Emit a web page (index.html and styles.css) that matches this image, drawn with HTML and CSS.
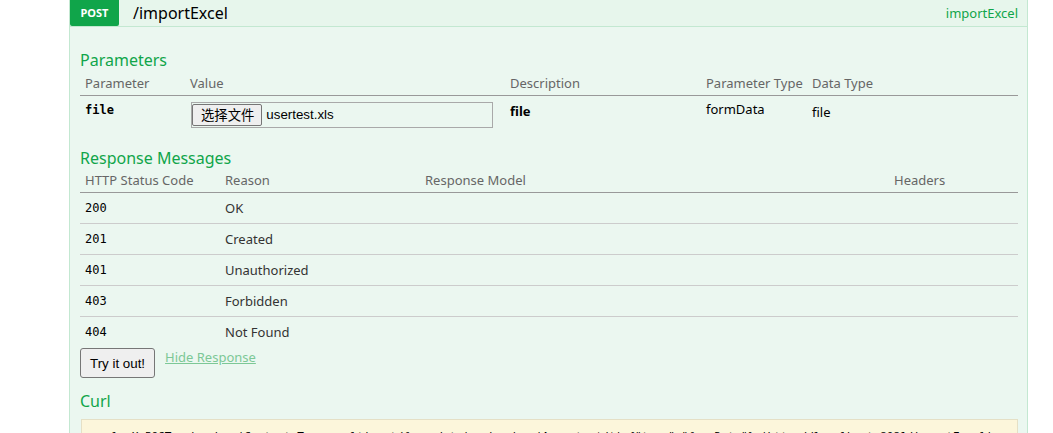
FILE: index.html
```html
<!DOCTYPE html>
<html>
<head>
<meta charset="utf-8">
<link rel="stylesheet" href="styles.css">
</head>
<body>
<div class="op">
  <div class="heading">
    <span class="badge">POST</span>
    <span class="path">/importExcel</span>
    <span class="nick">importExcel</span>
  </div>
  <div class="content">
    <h4 class="title params-title">Parameters</h4>
    <table class="tbl params">
      <colgroup>
        <col class="c-param"><col class="c-value"><col class="c-desc"><col class="c-ptype"><col>
      </colgroup>
      <thead>
        <tr><th>Parameter</th><th>Value</th><th>Description</th><th>Parameter Type</th><th>Data Type</th></tr>
      </thead>
      <tbody>
        <tr>
          <td class="code strong">file</td>
          <td>
            <div class="file-input">
              <span class="file-btn">选择文件</span>
              <span class="file-name">usertest.xls</span>
            </div>
          </td>
          <td class="strong">file</td>
          <td class="ptype">formData</td>
          <td class="dtype">file</td>
        </tr>
      </tbody>
    </table>

    <h4 class="title resp-title">Response Messages</h4>
    <table class="tbl resp">
      <colgroup>
        <col class="c-code"><col class="c-reason"><col class="c-model"><col>
      </colgroup>
      <thead>
        <tr><th>HTTP Status Code</th><th>Reason</th><th>Response Model</th><th>Headers</th></tr>
      </thead>
      <tbody>
        <tr><td class="code">200</td><td>OK</td><td></td><td></td></tr>
        <tr><td class="code">201</td><td>Created</td><td></td><td></td></tr>
        <tr><td class="code">401</td><td>Unauthorized</td><td></td><td></td></tr>
        <tr><td class="code">403</td><td>Forbidden</td><td></td><td></td></tr>
        <tr><td class="code">404</td><td>Not Found</td><td></td><td></td></tr>
      </tbody>
    </table>

    <div class="actions">
      <button class="try">Try it out!</button>
      <a class="hide" href="#">Hide Response</a>
    </div>

    <h4 class="title curl-title">Curl</h4>
    <pre class="curl">curl -X POST --header 'Content-Type: multipart/form-data' --header 'Accept: */*' {"type":"formData"} 'http://localhost:8081/importExcel'</pre>
  </div>
</div>
</body>
</html>
```

FILE: styles.css
```css
html, body {
  margin: 0;
  padding: 0;
  background: #ffffff;
}

body {
  font-family: "Noto Sans", "Open Sans", sans-serif;
  font-size: 13px;
  color: #333333;
  overflow: hidden;
}

.op {
  margin-left: 69px;
  width: 959px;
}

.heading {
  display: flex;
  align-items: center;
  height: 27px;
  background: #e7f6ec;
  border-left: 1px solid #c3e8d1;
  border-right: 1px solid #c3e8d1;
  border-bottom: 1px solid #c3e8d1;
  box-sizing: border-box;
}

.badge {
  align-self: flex-start;
  width: 49px;
  height: 26px;
  line-height: 26px;
  background: #10a54a;
  color: #ffffff;
  font-size: 11px;
  font-weight: bold;
  text-align: center;
  border-radius: 0 0 2px 2px;
}

.path {
  margin-left: 14px;
  font-size: 16px;
  color: #000000;
  line-height: 24px;
}

.nick {
  margin-left: auto;
  margin-right: 9px;
  font-size: 13px;
  color: #10a54a;
}

.content {
  background: #ebf7f0;
  border-left: 1px solid #c3e8d1;
  border-right: 1px solid #c3e8d1;
  padding: 23px 9px 0 10px;
  height: 420px;
}

.title {
  margin: 0;
  font-size: 16px;
  font-weight: normal;
  line-height: 20px;
  color: #10a54a;
}

.tbl {
  width: 100%;
  border-collapse: collapse;
  table-layout: fixed;
}

.c-param { width: 105px; }
.c-value { width: 320px; }
.c-desc { width: 196px; }
.c-ptype { width: 106px; }
.c-code { width: 140px; }
.c-reason { width: 200px; }
.c-model { width: 469px; }

.tbl th {
  text-align: left;
  font-weight: normal;
  color: #666666;
  font-size: 13px;
  line-height: 18px;
  padding: 3px 5px 3px 5px;
  border-bottom: 1px solid #999999;
  white-space: nowrap;
}

.params th {
  padding: 4px 5px 3px 5px;
}

.tbl td {
  vertical-align: top;
  padding: 6px 5px;
  line-height: 18px;
  font-size: 13px;
  color: #333333;
}

.code {
  font-family: "DejaVu Sans Mono", "Liberation Mono", monospace;
  font-size: 12px !important;
  color: #000000 !important;
}

.strong {
  font-weight: bold;
  color: #000000 !important;
}

.params td {
  padding: 6px 5px 6px 5px;
  height: 26px;
}

.params td.code {
  padding-top: 5px;
}

.params td.ptype {
  padding-top: 4px;
  color: #000000;
}

.params td.dtype {
  padding-top: 7px;
  color: #000000;
}

.file-input {
  display: flex;
  align-items: center;
  width: 300px;
  height: 24px;
  margin-left: 1px;
  border: 1px solid #a9a9a9;
  background: #ebf7f0;
  font-family: "Liberation Sans", "Noto Sans CJK SC", sans-serif;
  font-size: 13.33px;
  color: #000000;
}

.file-btn {
  font-family: "Liberation Sans", "Noto Sans CJK SC", sans-serif;
  height: 22px;
  line-height: 22px;
  padding: 0 7px 0 8px;
  border: 1px solid #767676;
  border-radius: 2px;
  background: #efefef;
  box-sizing: border-box;
}

.file-name {
  margin-left: 4px;
}

.resp-title {
  margin-top: 13px;
}

.resp th {
  padding-top: 3px;
}

.resp tbody tr + tr td {
  border-top: 1px solid #cccccc;
}

.actions {
  display: flex;
  align-items: flex-start;
  gap: 10px;
  margin-top: 1px;
}

.try {
  height: 30px;
  padding: 0 9px;
  font-family: "Liberation Sans", Arial, sans-serif;
  font-size: 13.33px;
  color: #000000;
  background: #efefef;
  border: 1px solid #767676;
  border-radius: 3px;
}

.hide {
  margin-top: 0;
  font-size: 13px;
  line-height: 18px;
  color: #7cc896;
  text-decoration: underline;
}

.curl-title {
  margin-top: 13px;
}

.curl {
  margin: 8px 0 0 1px;
  padding: 9px 10px;
  background: #fcf6db;
  border: 1px solid #e5e0c6;
  font-family: "DejaVu Sans Mono", "Liberation Mono", monospace;
  font-size: 11px;
  line-height: 16px;
  color: #000000;
  white-space: pre;
  overflow: hidden;
}
```
